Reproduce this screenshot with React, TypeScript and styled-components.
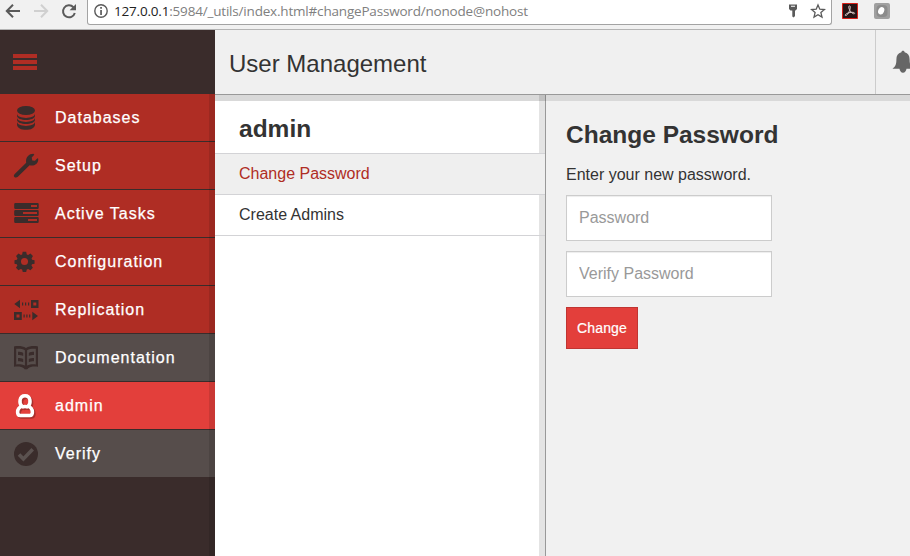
import React from 'react';
import styled, { createGlobalStyle, css } from 'styled-components';

const GlobalStyle = createGlobalStyle`
  * { box-sizing: border-box; }
  html, body { margin: 0; padding: 0; overflow: hidden; }
  body { font-family: "Liberation Sans", Arial, sans-serif; color: #333; background: #f1f1f1; }
`;

const Window = styled.div`
  width: 910px;
  height: 556px;
  display: flex;
  flex-direction: column;
  overflow: hidden;
`;

const BrowserBar = styled.div`
  height: 30px;
  flex: none;
  display: flex;
  align-items: flex-start;
  background: #f1f1f1;
  border-bottom: 1px solid #b4b4b4;
`;

const NavButtons = styled.div`
  width: 87px;
  height: 22px;
  display: flex;
  svg { display: block; }
`;

const AddressBar = styled.div`
  width: 745px;
  height: 25px;
  display: flex;
  background: #fff;
  border: 1px solid #a3a3a3;
  border-top: 0;
  border-radius: 0 0 3px 3px;
  padding-left: 5px;
`;

const Url = styled.div`
  margin-left: 5px;
  width: 674px;
  font: 13.5px/23px "Open Sans", "Noto Sans", sans-serif;
  letter-spacing: -0.19px;
  white-space: nowrap;
  color: #808080;
  span { color: #222; }
`;

const Extensions = styled.div`
  display: flex;
  gap: 16px;
  padding: 3px 0 0 10px;
`;

const AppArea = styled.div`
  flex: 1;
  display: flex;
  min-height: 0;
`;

const Sidebar = styled.nav`
  width: 215px;
  flex: none;
  display: flex;
  flex-direction: column;
  background: #3a2c2b;
`;

const Burger = styled.div`
  height: 64px;
  flex: none;
  padding: 24px 0 0 13px;
  display: flex;
  flex-direction: column;
  gap: 2px;
`;

const BurgerLine = styled.div`
  width: 24px;
  height: 4px;
  background: #af2d24;
`;

const NavList = styled.div`
  flex: 1;
  position: relative;
  &::after {
    content: "";
    position: absolute;
    inset: 0 0 0 auto;
    width: 6px;
    background: rgba(0, 0, 0, 0.11);
  }
`;

type Tone = 'red' | 'gray' | 'active';
const tones: Record<Tone, string> = { red: '#af2d24', gray: '#564d4b', active: '#e33f3b' };

const NavItem = styled.div<{ $tone: Tone }>`
  height: 48px;
  display: flex;
  align-items: flex-start;
  padding-left: 13px;
  background: ${(p) => tones[p.$tone]};
  border-bottom: 1px solid #3a2c2b;
  svg { display: block; margin-top: 11px; flex: none; color: #3a2c2b; }
`;

const NavLabel = styled.span`
  margin-left: 16px;
  font-size: 16px;
  line-height: 48px;
  letter-spacing: 1px;
  -webkit-text-stroke: 0.25px #fff;
  color: #fff;
`;

const Main = styled.div`
  flex: 1;
  display: flex;
  flex-direction: column;
  min-width: 0;
`;

const Header = styled.header`
  height: 65px;
  flex: none;
  display: flex;
  justify-content: space-between;
  background: #f0f0f0;
  border-bottom: 1px solid #999;
`;

const PageTitle = styled.h1`
  margin: 0 0 0 14px;
  font-size: 24px;
  font-weight: 400;
  line-height: 67px;
  color: #333;
`;

const BellBox = styled.div`
  width: 35px;
  border-left: 1px solid #ccc;
  padding: 20px 0 0 16px;
  overflow: hidden;
  svg { display: block; }
`;

const Panels = styled.div`
  flex: 1;
  display: flex;
  position: relative;
  &::before {
    content: "";
    position: absolute;
    inset: 0 0 auto 0;
    height: 6px;
    background: linear-gradient(to right, #d9d9d9 324px, #c1c1c1 324px 330px, #8a8a8a 330px 331px, #d9d9d9 331px);
    z-index: 2;
  }
`;

const ListPanel = styled.section`
  width: 331px;
  flex: none;
  border-right: 1px solid #999;
  background: linear-gradient(to left, #e4e4e4 6px, #fff 6px);
`;

const ListTitle = styled.h2`
  margin: 0;
  height: 58px;
  padding-left: 24px;
  font-size: 24.5px;
  line-height: 67px;
`;

const ListRow = styled.div<{ $selected?: boolean }>`
  height: 41px;
  padding-left: 24px;
  font-size: 16px;
  line-height: 40px;
  border-top: 1px solid #d3d3d6;
  ${(p) =>
    p.$selected
      ? css`background: #efefef; color: #af2d24;`
      : css`height: 42px; border-bottom: 1px solid #d3d3d6;`}
`;

const FormPanel = styled.form`
  flex: 1;
  padding: 20px;
  background: #f1f1f1;
`;

const FormTitle = styled.h2`
  margin: 0;
  font-size: 24.5px;
  line-height: 40px;
`;

const Hint = styled.p`
  margin: 9px 0 10px;
  font-size: 16px;
  line-height: 21px;
`;

const Field = styled.input`
  display: block;
  width: 206px;
  height: 46px;
  margin: 0 0 10px;
  padding: 0 12px;
  font: 16px "Liberation Sans", Arial, sans-serif;
  border: 1px solid #ccc;
  border-radius: 0;
  background: #fff;
  box-shadow: inset 0 1px 1px rgba(0, 0, 0, 0.075);
  &::placeholder { color: #999; opacity: 1; }
`;

const Submit = styled.button`
  display: block;
  width: 72px;
  height: 42px;
  padding: 0;
  font: 14px "Liberation Sans", Arial, sans-serif;
  letter-spacing: 0.15px;
  -webkit-text-stroke: 0.2px #fff;
  color: #fff;
  background: #e33f3b;
  border: 1px solid #c03532;
  border-radius: 0;
`;

const Icon = ({ children }: { children: React.ReactNode }) => (
  <svg width="26" height="26" viewBox="0 0 26 26" fill="currentColor">{children}</svg>
);

const DatabaseIcon = () => (
  <Icon>
    <ellipse cx="13" cy="5.5" rx="9" ry="4.5" />
    <path d="M4 8.6c0 5.8 18 5.8 18 0v2.2c0 5.6-18 5.6-18 0zM4 12.6c0 5.8 18 5.8 18 0v2.2c0 5.6-18 5.6-18 0zM4 16.6c0 5.8 18 5.8 18 0v2.8c0 7.2-18 7.2-18 0z" />
  </Icon>
);

const WrenchIcon = () => (
  <Icon>
    <path d="M1.7 21 13.2 9.8C12.3 4.9 15.3.8 20.4.7L21.3 1.8 18.7 4.6 19.3 7.4 22 7.7 24.4 5.2 25.2 5.8C25.7 10.5 21.2 13.6 16.6 12.3L5.1 23.6C2.6 26-.8 23.5 1.7 21Z" />
  </Icon>
);

const TasksIcon = () => (
  <Icon>
    <path fillRule="evenodd" d="M2 2h23l.7.7v4.600l-.7.7H2l-.8-.7V2.700zM18 4v2h6V4zM2 9h23l.7.7v4.600l-.7.7H2l-.8-.7V9.700zM10 11v2h14v-2zM2 16h23l.7.7v4.600l-.7.7H2l-.8-.7v-4.600zM15 18v2h9v-2z" />
  </Icon>
);

const GearIcon = () => (
  <Icon>
    <path
      fillRule="evenodd"
      d="M9.5 2.2h4l.7 3 1.5.6 2.7-1.6 2.8 2.8-1.6 2.7.6 1.5 2.8.6v3.8l-2.9.7-.6 1.5 1.6 2.6-2.8 2.7-2.6-1.5-1.5.6-.7 3H9.6l-.7-3-1.6-.6-2.6 1.6-2.8-2.8 1.6-2.6-.6-1.5-2.7-.7v-3.8l2.8-.6.6-1.5-1.6-2.8 2.7-2.7 2.8 1.6 1.4-.6zM11.6 9.1a4 4 0 1 0 0 8 4 4 0 0 0 0-8z"
      transform="translate(1.3 .9) scale(.88)"
    />
  </Icon>
);

const ReplicationIcon = () => (
  <Icon>
    <path
      fillRule="evenodd"
      d="M1.3 7 7 2.7v8.6zM9 5.5h1.2v3H9zM12 5.5h1.2v3H12zM15 5.5h1.2v3H15zM18 3h7.5v8H18zM20.3 5.5v3h3v-3zM1 15h7.8v8H1zM3.5 17.5v3h3v-3zM10.5 17.5h1.2v3h-1.2zM13.3 17.5h1.2v3h-1.2zM16.1 17.5h1.2v3h-1.2zM19.3 14.7 25 19l-5.7 4.3z"
    />
  </Icon>
);

const BookIcon = () => (
  <Icon>
    <path
      fillRule="evenodd"
      d="M1 2.4c4.3-.6 8.8-.4 12 1.7 3.2-2.1 7.7-2.3 12-1.7v20.4c-3.7-.5-7.8-.3-9.8 1.4-.8 1.6-3.6 1.6-4.4 0-2-1.7-6.1-1.9-9.8-1.4zM3.2 4.8v15.6c3-.4 6.3-.1 8.7 1.2V6.2c-2.4-1.4-5.5-1.7-8.7-1.4zM22.8 4.8c-3.2-.3-6.3 0-8.7 1.4v15.4c2.4-1.3 5.7-1.6 8.7-1.2z"
      transform="translate(0 -1)"
    />
    <path d="M5 6.8c2 0 3.8.3 5.2 1.1v3.2C8.8 10.3 7 10 5 10zM5 13c2 0 3.8.3 5.2 1.1v3.2C8.8 16.5 7 16.2 5 16.2zM21 6.8c-2 0-3.8.3-5.2 1.1v3.2c1.4-.8 3.2-1.1 5.2-1.1zM21 13c-2 0-3.8.3-5.2 1.1v3.2c1.4-.8 3.2-1.1 5.2-1.1z" />
  </Icon>
);

const personPath =
  'M9 13.4C5.9 10.7 6 2.7 12 2.7s6.1 8 3 10.7M9 13.4C6.2 14.2 4.6 16.4 4.6 19.3c0 2.2.8 3.2 2.6 3.2h9.6c1.8 0 2.6-1 2.6-3.2 0-2.9-1.6-5.1-4.4-5.9M8.7 14.2c2-.9 4.6-.9 6.6 0';

const PersonIcon = () => (
  <Icon>
    <g fill="none" strokeWidth="3.5">
      <path d={personPath} stroke="#a92f2c" transform="translate(1.5 1.5)" />
      <path d={personPath} stroke="#fff" />
    </g>
  </Icon>
);

const CheckIcon = () => (
  <Icon>
    <circle cx="13" cy="13" r="12" />
    <path d="m6 13.4 4.4 4.5 9.3-9.6" fill="none" stroke="#5b5250" strokeWidth="3.6" />
  </Icon>
);

const items: { label: string; tone: Tone; icon: React.FC }[] = [
  { label: 'Databases', tone: 'red', icon: DatabaseIcon },
  { label: 'Setup', tone: 'red', icon: WrenchIcon },
  { label: 'Active Tasks', tone: 'red', icon: TasksIcon },
  { label: 'Configuration', tone: 'red', icon: GearIcon },
  { label: 'Replication', tone: 'red', icon: ReplicationIcon },
  { label: 'Documentation', tone: 'gray', icon: BookIcon },
  { label: 'admin', tone: 'active', icon: PersonIcon },
  { label: 'Verify', tone: 'gray', icon: CheckIcon },
];

const Browser = () => (
  <BrowserBar>
    <NavButtons>
      <svg width="87" height="22" fill="none" strokeWidth="2">
        <path d="M20 11H7.5M13 4.8 6.8 11l6.2 6.2" stroke="#5a5a5a" />
        <path d="M34 11h12.5M41 4.8l6.2 6.2-6.2 6.2" stroke="#d0d0d0" />
        <path d="M73.4 7.2A6 6 0 1 0 74.8 13" stroke="#5a5a5a" />
        <path d="M76 4v6.2h-6.4z" fill="#5a5a5a" />
      </svg>
    </NavButtons>
    <AddressBar>
      <svg width="16" height="22">
        <circle cx="8" cy="11" r="6.2" fill="none" stroke="#5a5a5a" strokeWidth="1.4" />
        <path d="M7.2 7h1.7v1.7H7.2zM7.2 10h1.7v5H7.2z" fill="#5a5a5a" />
      </svg>
      <Url><span>127.0.0.1</span>:5984/_utils/index.html#changePassword/nonode@nohost</Url>
      <svg width="44" height="24">
        <path fillRule="evenodd" d="M1 5h8v4.5L7.5 11H7v5.5L5.7 18 4.3 17v-6H2.5L1 9.5zM3 6.2v1h4v-1z" fill="#5a5a5a" transform="translate(1 -.5)" />
        <path d="m31 5 1.8 4.2 4.6.4-3.5 3 1.1 4.5-4-2.4-4 2.4 1.1-4.5-3.5-3 4.6-.4z" fill="none" stroke="#5a5a5a" strokeWidth="1.3" />
      </svg>
    </AddressBar>
    <Extensions>
      <svg width="16" height="16">
        <path d="M.5.5h15v15H.5z" fill="#271516" stroke="#d82018" />
        <path d="M7.1 3c1.7-.8 1.3 2.5.6 4.2C6.8 9.7 5 13 3.4 12.5 2.2 12 4.8 10 8 9.5c3-.5 5 0 4.6 1-.6 1.2-3.6-.9-4.7-3C7 6 6.3 3.5 7.1 3z" fill="none" stroke="#d6c8c6" strokeWidth="1" />
      </svg>
      <svg width="16" height="16">
        <rect width="16" height="16" rx="2" fill="#a0a0a0" />
        <rect x="2.5" y="2" width="11" height="12" rx="4" fill="#8c8c8c" />
        <ellipse cx="7.2" cy="7.7" rx="2.9" ry="3.8" transform="rotate(25 7.2 7.7)" fill="#fff" />
      </svg>
    </Extensions>
  </BrowserBar>
);

export default function App() {
  return (
    <>
      <GlobalStyle />
      <Window>
        <Browser />
        <AppArea>
          <Sidebar>
            <Burger>
              <BurgerLine />
              <BurgerLine />
              <BurgerLine />
            </Burger>
            <NavList>
              {items.map(({ label, tone, icon: ItemIcon }) => (
                <NavItem key={label} $tone={tone}>
                  <ItemIcon />
                  <NavLabel>{label}</NavLabel>
                </NavItem>
              ))}
            </NavList>
          </Sidebar>
          <Main>
            <Header>
              <PageTitle>User Management</PageTitle>
              <BellBox>
                <svg width="22" height="24" viewBox="0 0 22 24">
                  <path d="M10.5 0c1 0 1.6.6 1.6 1.6 3.5.8 5 3.3 5 7 0 5 .8 7 3.9 9.5H14c-.3 2.4-1.6 3.9-3.5 3.9S7.3 20.5 7 18.1H0c3.1-2.5 3.9-4.5 3.9-9.5 0-3.7 1.5-6.2 5-7C8.900.6 9.500 0 10.500 0z" fill="#666" transform="translate(.5 .7)" />
                </svg>
              </BellBox>
            </Header>
            <Panels>
              <ListPanel>
                <ListTitle>admin</ListTitle>
                <ListRow $selected>Change Password</ListRow>
                <ListRow>Create Admins</ListRow>
              </ListPanel>
              <FormPanel>
                <FormTitle>Change Password</FormTitle>
                <Hint>Enter your new password.</Hint>
                <Field type="password" placeholder="Password" />
                <Field type="password" placeholder="Verify Password" />
                <Submit type="button">Change</Submit>
              </FormPanel>
            </Panels>
          </Main>
        </AppArea>
      </Window>
    </>
  );
}
